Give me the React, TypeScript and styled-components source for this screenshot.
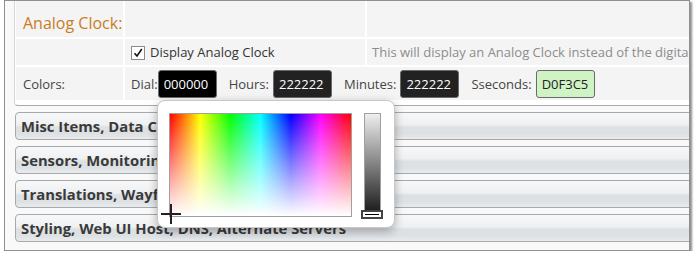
import React from "react";
import styled, { createGlobalStyle } from "styled-components";

const GlobalStyle = createGlobalStyle`
  html, body {
    margin: 0;
    padding: 0;
    background: #ffffff;
    overflow: hidden;
  }
  body {
    font-family: "Open Sans", "Liberation Sans", sans-serif;
    color: #333333;
  }
`;

const Frame = styled.div`
  position: relative;
  box-sizing: border-box;
  width: 686px;
  height: 251px;
  margin-left: 4px;
  padding-left: 9px;
  background: #f9f9f9;
  border: 1px solid #8f8f8f;
  box-shadow: 2px 2px 2px rgba(0, 0, 0, 0.45);
  overflow: hidden;
`;

const Panel = styled.div`
  background: #ffffff;
  border-left: 1px solid #d6d6d6;
  border-bottom: 1px solid #aaaaaa;
  border-bottom-left-radius: 4px;
  padding: 0 0 5px 1px;
  margin-right: -4px;
`;

const Grid = styled.div`
  display: grid;
  grid-template-columns: 107px 240px 1fr;
  grid-template-rows: 36px 26px 33px;
  gap: 2px;
`;

const Cell = styled.div<{ $span?: number; $top?: boolean; $clip?: boolean }>`
  display: flex;
  align-items: ${(p) => (p.$top ? "flex-start" : "center")};
  grid-column: span ${(p) => p.$span ?? 1};
  min-width: 0;
  background: #f4f4f4;
  padding: ${(p) => (p.$top ? "10px 0 0 7px" : "0 0 0 7px")};
  font-size: 13px;
  color: #444444;
  white-space: nowrap;
  overflow: ${(p) => (p.$clip ? "hidden" : "visible")};
`;

const Heading = styled.span`
  font-size: 16px;
  line-height: 22px;
  margin-top: 1px;
  color: #c97d1c;
`;

const CheckLabel = styled.label`
  display: flex;
  align-items: center;
  gap: 5px;
  margin-left: -1px;
  color: #333333;
`;

const Box = styled.span`
  display: inline-flex;
  align-items: center;
  justify-content: center;
  box-sizing: border-box;
  width: 14px;
  height: 14px;
  background: #ffffff;
  border: 1px solid #8a8a8a;
  margin-top: 1px;
`;

const Hint = styled.span`
  color: #8c8c8c;
  margin-left: -2px;
`;

const Colors = styled.div`
  display: flex;
  align-items: center;
  gap: 12px;
  margin-left: -1px;
`;

const Field = styled.div<{ $tight?: boolean }>`
  display: flex;
  align-items: center;
  gap: ${(p) => (p.$tight ? "0" : "4px")};
`;

const Anchor = styled.span`
  position: relative;
  display: flex;
`;

const Swatch = styled.input<{ $bg: string; $fg: string }>`
  box-sizing: border-box;
  width: 59px;
  height: 28px;
  padding: 0 0 0 5px;
  font-family: inherit;
  font-size: 13px;
  color: ${(p) => p.$fg};
  background: ${(p) => p.$bg};
  border: 1px solid #6a6a6a;
  border-radius: 3px;
  outline: none;
`;

const Picker = styled.div`
  position: absolute;
  top: calc(100% + 2px);
  left: -1px;
  z-index: 5;
  box-sizing: border-box;
  width: 238px;
  height: 128px;
  display: flex;
  gap: 12px;
  padding: 12px 0 0 11px;
  background: #ffffff;
  border: 1px solid #c8c8c8;
  border-radius: 8px;
  box-shadow: 0 3px 10px rgba(0, 0, 0, 0.3);
`;

const HueField = styled.div`
  position: relative;
  box-sizing: border-box;
  width: 183px;
  height: 104px;
  border: 1px solid #a0a0a0;
  background: linear-gradient(to bottom, rgba(255, 255, 255, 0), #ffffff),
    linear-gradient(
      to right,
      #ff0000,
      #ffff00,
      #00ff00,
      #00ffff,
      #0000ff,
      #ff00ff,
      #ff0000
    );
`;

const Cross = styled.div`
  position: absolute;
  left: -9px;
  bottom: -8px;
  width: 20px;
  height: 20px;
  &::before,
  &::after {
    content: "";
    position: absolute;
    background: #222222;
  }
  &::before {
    left: 9px;
    top: 0;
    width: 2px;
    height: 20px;
  }
  &::after {
    top: 9px;
    left: 0;
    width: 20px;
    height: 2px;
  }
`;

const Shade = styled.div`
  position: relative;
  box-sizing: border-box;
  width: 17px;
  height: 105px;
  border: 1px solid #a0a0a0;
  background: linear-gradient(to bottom, #eeeeee, #111111);
`;

const Handle = styled.div`
  position: absolute;
  left: -4px;
  bottom: -2px;
  box-sizing: border-box;
  width: 22px;
  height: 9px;
  border: 2px solid #444444;
  background: #ffffff;
  &::after {
    content: "";
    position: absolute;
    left: 2px;
    right: 2px;
    top: 2px;
    height: 1px;
    background: #000000;
  }
`;

const Section = styled.div`
  box-sizing: border-box;
  height: 28px;
  margin: 6px -4px 0 1px;
  padding-left: 5px;
  display: flex;
  align-items: center;
  font-size: 14.8px;
  font-weight: 700;
  color: #3a3a3a;
  border: 1px solid #a8a8a8;
  border-radius: 4px;
  background: linear-gradient(
    to bottom,
    #f7f8f9 0%,
    #eef0f2 45%,
    #dde1e4 55%,
    #dde1e4 80%,
    #e9ecee 100%
  );
`;

const sections = [
  "Misc Items, Data Cleanup",
  "Sensors, Monitoring",
  "Translations, Wayfinding",
  "Styling, Web UI Host, DNS, Alternate Servers",
];

function App() {
  return (
    <>
      <GlobalStyle />
      <Frame>
        <Panel>
          <Grid>
            <Cell $top>
              <Heading>Analog Clock:</Heading>
            </Cell>
            <Cell />
            <Cell />

            <Cell />
            <Cell>
              <CheckLabel>
                <Box>
                  <svg width="10" height="10" viewBox="0 0 10 10">
                    <path d="M1.5 5.2 L4 8 L8.8 1" fill="none" stroke="#111" strokeWidth="1.6" />
                  </svg>
                </Box>
                Display Analog Clock
              </CheckLabel>
            </Cell>
            <Cell $clip>
              <Hint>This will display an Analog Clock instead of the digital clock.</Hint>
            </Cell>

            <Cell>Colors:</Cell>
            <Cell $span={2}>
              <Colors>
                <Field $tight>
                  Dial:
                  <Anchor>
                    <Swatch $bg="#000000" $fg="#ffffff" defaultValue="000000" readOnly />
                    <Picker>
                      <HueField>
                        <Cross />
                      </HueField>
                      <Shade>
                        <Handle />
                      </Shade>
                    </Picker>
                  </Anchor>
                </Field>
                <Field>
                  Hours:
                  <Swatch $bg="#222222" $fg="#ffffff" defaultValue="222222" readOnly />
                </Field>
                <Field>
                  Minutes:
                  <Swatch $bg="#222222" $fg="#ffffff" defaultValue="222222" readOnly />
                </Field>
                <Field>
                  Sseconds:
                  <Swatch $bg="#d0f3c5" $fg="#222222" defaultValue="D0F3C5" readOnly />
                </Field>
              </Colors>
            </Cell>
          </Grid>
        </Panel>
        {sections.map((s) => (
          <Section key={s}>{s}</Section>
        ))}
      </Frame>
    </>
  );
}

export default App;
